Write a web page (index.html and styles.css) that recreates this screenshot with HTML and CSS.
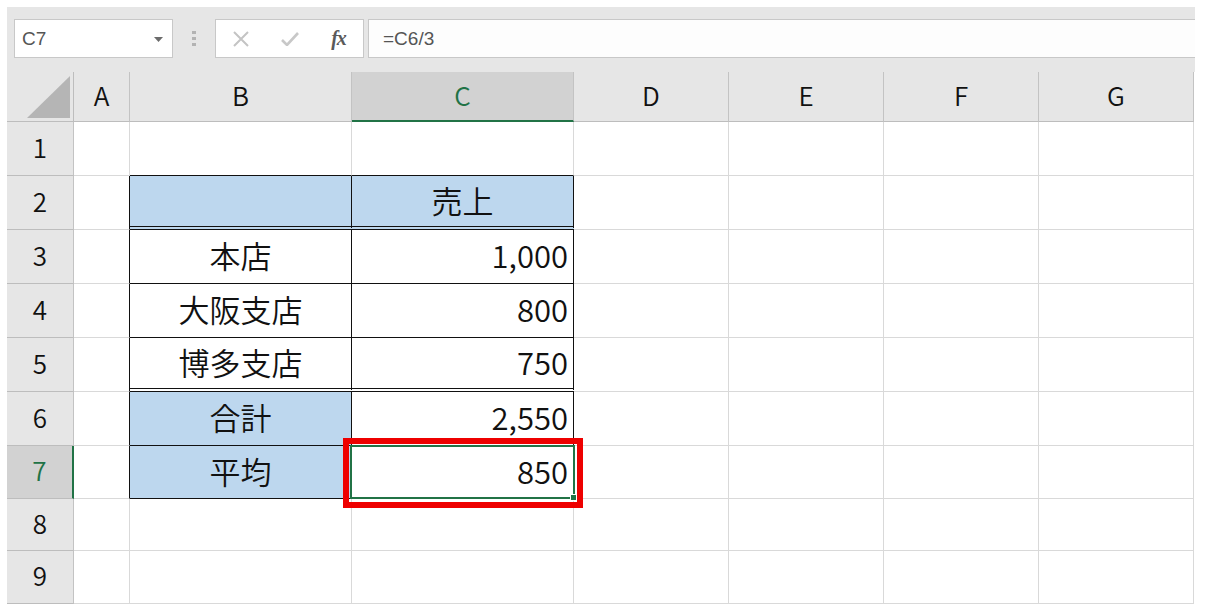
FILE: index.html
```html
<!DOCTYPE html>
<html>
<head>
    <title>Sheet1 - C7</title>
    <link rel="stylesheet" href="styles.css">
</head>
<body>
    <div class="sheet">
        <div class="toolbar">
            <div class="namebox">
                <span>C7</span>
                <svg class="caret" width="9" height="5" viewBox="0 0 9 5"><path d="M0 0h9L4.5 5z" fill="#6b6b6b"/></svg>
            </div>
            <svg class="grip" width="4" height="16" viewBox="0 0 4 16">
                <rect x="0" y="0" width="4" height="3" fill="#b3b3b3"/>
                <rect x="0" y="6" width="4" height="3" fill="#b3b3b3"/>
                <rect x="0" y="12" width="4" height="3" fill="#b3b3b3"/>
            </svg>
            <div class="fxbox">
                <span class="slot"><svg width="16" height="16" viewBox="0 0 16 16"><path d="M1 1l14 14M15 1L1 15" stroke="#c4c4c4" stroke-width="2"/></svg></span>
                <span class="slot"><svg width="18" height="14" viewBox="0 0 18 14"><path d="M1 8l5 5L17 1" stroke="#c8c8c8" stroke-width="2.6" fill="none"/></svg></span>
                <span class="slot"><i class="fx">fx</i></span>
            </div>
            <div class="formula">=C6/3</div>
        </div>

        <div class="grid">
            <div class="corner"><span class="tri"></span></div>
            <div class="colhead">A</div>
            <div class="colhead">B</div>
            <div class="colhead active">C</div>
            <div class="colhead">D</div>
            <div class="colhead">E</div>
            <div class="colhead">F</div>
            <div class="colhead">G</div>

            <!-- row 1 -->
            <div class="rowhead">1</div>
            <div class="cell"></div>
            <div class="cell top-edge"></div>
            <div class="cell top-edge"></div>
            <div class="cell"></div><div class="cell"></div><div class="cell"></div><div class="cell"></div>

            <!-- row 2 -->
            <div class="rowhead">2</div>
            <div class="cell left-edge"></div>
            <div class="cell tb fill dbl"></div>
            <div class="cell tb fill dbl center">売上</div>
            <div class="cell"></div><div class="cell"></div><div class="cell"></div><div class="cell"></div>

            <!-- row 3 -->
            <div class="rowhead">3</div>
            <div class="cell left-edge"></div>
            <div class="cell tb center">本店</div>
            <div class="cell tb num">1,000</div>
            <div class="cell"></div><div class="cell"></div><div class="cell"></div><div class="cell"></div>

            <!-- row 4 -->
            <div class="rowhead">4</div>
            <div class="cell left-edge"></div>
            <div class="cell tb center">大阪支店</div>
            <div class="cell tb num">800</div>
            <div class="cell"></div><div class="cell"></div><div class="cell"></div><div class="cell"></div>

            <!-- row 5 -->
            <div class="rowhead">5</div>
            <div class="cell left-edge"></div>
            <div class="cell tb dbl center">博多支店</div>
            <div class="cell tb dbl num">750</div>
            <div class="cell"></div><div class="cell"></div><div class="cell"></div><div class="cell"></div>

            <!-- row 6 -->
            <div class="rowhead">6</div>
            <div class="cell left-edge"></div>
            <div class="cell tb fill center">合計</div>
            <div class="cell tb num">2,550</div>
            <div class="cell"></div><div class="cell"></div><div class="cell"></div><div class="cell"></div>

            <!-- row 7 -->
            <div class="rowhead active">7</div>
            <div class="cell left-edge"></div>
            <div class="cell tb fill center">平均</div>
            <div class="cell tb num current">
                850
                <span class="sel"><span class="handle"></span></span>
                <span class="mark"></span>
            </div>
            <div class="cell"></div><div class="cell"></div><div class="cell"></div><div class="cell"></div>

            <!-- row 8 -->
            <div class="rowhead">8</div>
            <div class="cell"></div><div class="cell"></div><div class="cell"></div>
            <div class="cell"></div><div class="cell"></div><div class="cell"></div><div class="cell"></div>

            <!-- row 9 -->
            <div class="rowhead">9</div>
            <div class="cell"></div><div class="cell"></div><div class="cell"></div>
            <div class="cell"></div><div class="cell"></div><div class="cell"></div><div class="cell"></div>
        </div>
    </div>
</body>
</html>
```

FILE: styles.css
```css
* {
    margin: 0;
    padding: 0;
    box-sizing: border-box;
}

body {
    background: #fff;
    padding: 7px 11px 0 7px;
    font-family: "Noto Sans CJK JP", "Noto Sans", sans-serif;
    color: #111;
}

.sheet {
    width: 1188px;
}

/* formula bar */
.toolbar {
    height: 65px;
    background: #e6e6e6;
    display: flex;
    align-items: center;
    padding: 0 0 2px 7px;
}

.namebox {
    width: 159px;
    height: 39px;
    background: #fff;
    border: 1px solid #c8c8c8;
    display: flex;
    align-items: center;
    justify-content: space-between;
    padding: 0 9px 0 7px;
    font-family: "Liberation Sans", sans-serif;
    font-size: 19px;
    color: #555;
}

.caret {
    margin-top: 1px;
}

.grip {
    margin: 0 19px 0 19px;
}

.fxbox {
    width: 149px;
    height: 39px;
    background: #fff;
    border: 1px solid #c8c8c8;
    display: grid;
    grid-template-columns: repeat(3, 1fr);
    align-items: center;
    justify-items: center;
    margin-right: 4px;
}

.slot {
    display: flex;
    align-items: center;
}

.fx {
    font-family: "Liberation Serif", serif;
    font-weight: bold;
    font-size: 20px;
    color: #5a5a5a;
    letter-spacing: -1px;
}

.formula {
    flex: 1;
    height: 39px;
    background: #fdfdfd;
    border: 1px solid #c8c8c8;
    border-right: none;
    display: flex;
    align-items: center;
    padding-left: 14px;
    font-family: "Liberation Sans", sans-serif;
    font-size: 19px;
    color: #555;
}

/* grid */
.grid {
    display: grid;
    grid-template-columns: 67px 56px 222px 222px 155px 155px 155px 155px;
    grid-template-rows: 50px repeat(6, 54px) 53px 52px 53px;
}

.corner {
    background: #e6e6e6;
    border-right: 1px solid #bdbdbd;
    border-bottom: 1px solid #bdbdbd;
    display: flex;
    justify-content: flex-end;
    align-items: flex-end;
    padding: 0 3px 3px 0;
}

.tri {
    width: 43px;
    height: 42px;
    background: #b5b5b5;
    clip-path: polygon(100% 0, 100% 100%, 0 100%);
}

.colhead, .rowhead {
    background: #e6e6e6;
    border-right: 1px solid #c3c3c3;
    border-bottom: 1px solid #bdbdbd;
    display: flex;
    align-items: center;
    justify-content: center;
    font-size: 26px;
    font-weight: 350;
    color: #111;
}

.colhead {
    padding-bottom: 4px;
}

.rowhead {
    padding-bottom: 5px;
}

.colhead.active {
    background: #d2d2d2;
    color: #217346;
    border-bottom: 2px solid #217346;
}

.rowhead.active {
    background: #d2d2d2;
    color: #217346;
    border-right: 2px solid #217346;
}

.cell {
    border-right: 1px solid #d9d9d9;
    border-bottom: 1px solid #d9d9d9;
    display: flex;
    align-items: center;
    font-size: 31px;
    font-weight: 350;
    color: #111;
    padding-bottom: 4px;
}

.top-edge {
    border-bottom-color: #111;
}

.left-edge {
    border-right-color: #111;
}

.tb {
    border-right-color: #111;
    border-bottom-color: #111;
}

.dbl {
    border-bottom: 4px double #111;
}

.fill {
    background: #bdd7ee;
}

.center {
    justify-content: center;
}

.num {
    justify-content: flex-end;
    padding-right: 5px;
}

.current {
    position: relative;
}

.sel {
    position: absolute;
    top: -1px;
    left: -2px;
    right: -2px;
    bottom: -1px;
    border: 2px solid #217346;
}

.handle {
    position: absolute;
    right: -4px;
    bottom: -4px;
    width: 7px;
    height: 7px;
    background: #217346;
    border: 1px solid #fff;
}

/* red callout frame */
.mark {
    position: absolute;
    top: -8px;
    left: -9px;
    right: -10px;
    bottom: -10px;
    border: 6px solid #ee0000;
}
```
